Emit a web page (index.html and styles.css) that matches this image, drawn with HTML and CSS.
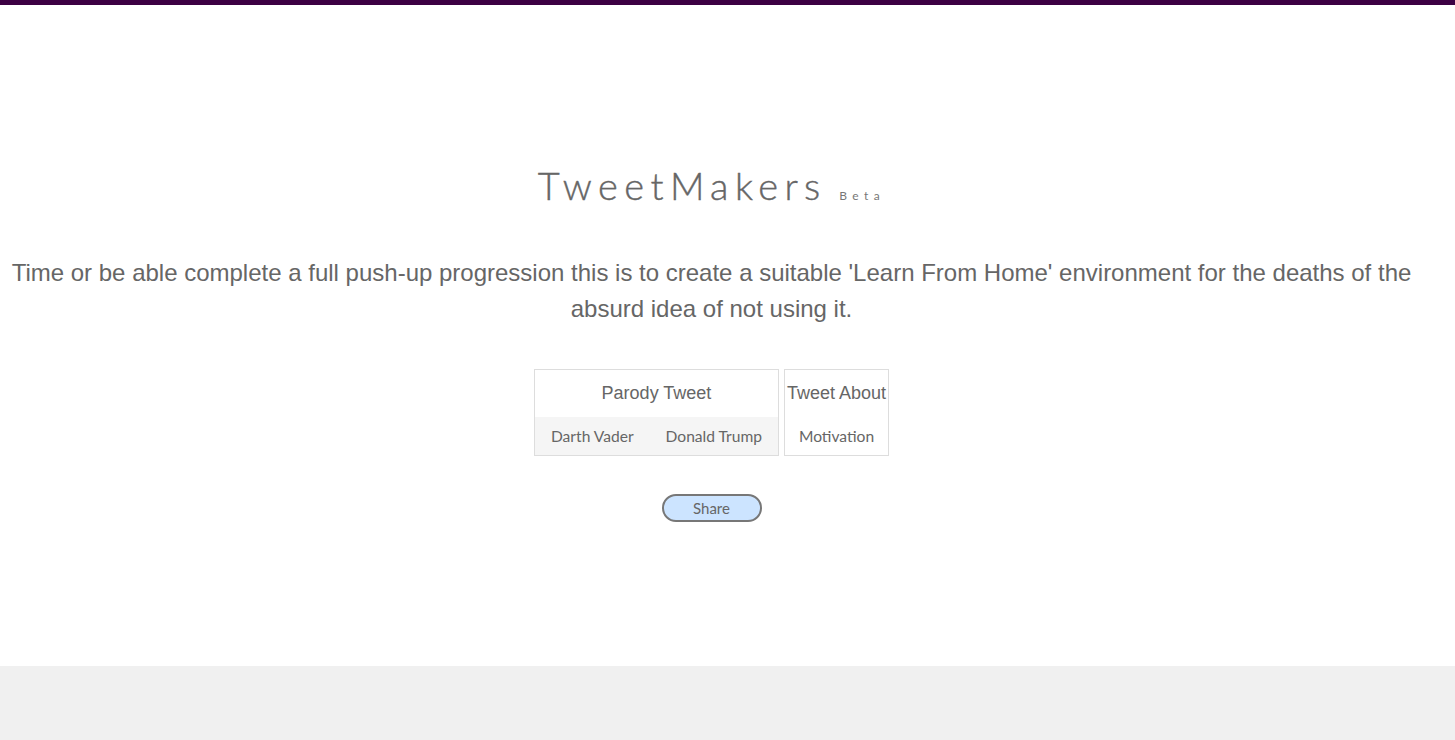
FILE: index.html
```html
<!DOCTYPE html>
<html>
<head>
<meta charset="utf-8">
<link rel="stylesheet" href="styles.css">
</head>
<body>
<div class="topbar"></div>
<main class="main">
  <h1 class="title">TweetMakers <span class="beta">Beta</span></h1>
  <p class="lead">Time or be able complete a full push-up progression this is to create a suitable 'Learn From Home' environment for the deaths of the absurd idea of not using it.</p>
  <div class="boxes">
    <div class="box">
      <div class="box-head">Parody Tweet</div>
      <div class="box-row grey">
        <span class="opt">Darth Vader</span>
        <span class="opt">Donald Trump</span>
      </div>
    </div>
    <div class="box">
      <div class="box-head">Tweet About</div>
      <div class="box-row center">
        <span class="opt">Motivation</span>
      </div>
    </div>
  </div>
  <div class="share-wrap"><button class="share">Share</button></div>
</main>
<footer class="footer"></footer>
</body>
</html>
```
FILE: styles.css
```css
html, body { margin: 0; padding: 0; }
body { background: #fff; font-family: "Liberation Sans", Arial, sans-serif; color: #666; }
.topbar { height: 5px; background: #3c0043; }
.main { height: 661px; padding-right: 32px; text-align: center; }
.title {
  margin: 0; padding-top: 159px;
  font-family: Lato, "Open Sans", sans-serif; font-weight: 300;
  font-size: 38px; letter-spacing: 6.4px; color: #666; line-height: 42px;
  -webkit-text-stroke: 0.4px #666;
}
.beta { font-size: 12px; letter-spacing: 5.4px; font-weight: 400; color: #777; margin-left: -4px; -webkit-text-stroke: 0; }
.lead { margin: 38px 0 0 0; font-size: 24px; line-height: 36px; color: #666; padding: 0 10px; }
.boxes { display: flex; justify-content: center; align-items: flex-start; gap: 5px; margin-top: 42px; }
.box { border: 1px solid #ddd; display: flex; flex-direction: column; }
.box-head { font-family: "Liberation Sans", Arial, sans-serif; font-size: 18px; line-height: 47px; height: 47px; padding: 0 2px; color: #666; }
.box-row { display: flex; height: 38px; align-items: center; }
.box-row.center { justify-content: center; }
.box-row.center .opt { padding: 0; }
.box-row.grey { background: #f5f5f5; }
.opt { font-family: Lato, "Open Sans", sans-serif; font-size: 15.6px; color: #666; padding: 0 16px; }
.share-wrap { margin-top: 38px; }
.share {
  width: 100px; height: 28px; border: 2px solid #777; border-radius: 14px;
  background: #cce4ff; color: #666; font-family: Lato, sans-serif; font-size: 15px; padding: 0;
}
.footer { height: 74px; background: #f0f0f0; }
```
